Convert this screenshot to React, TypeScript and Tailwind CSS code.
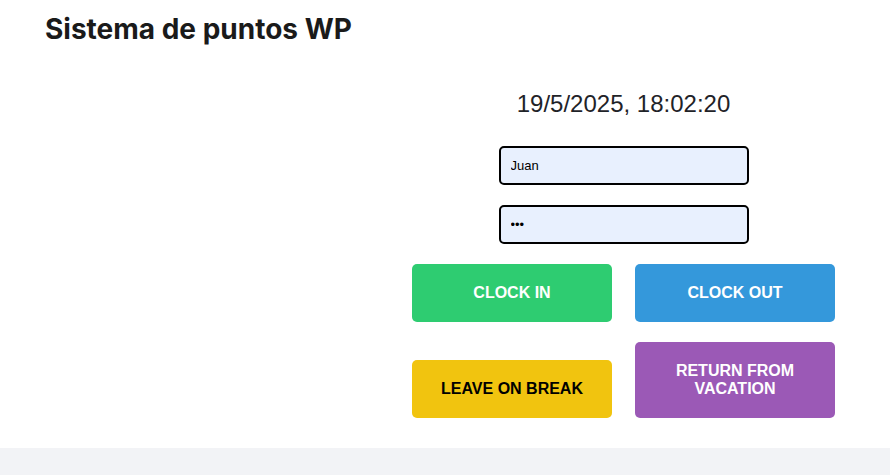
import React from "react";

function Btn({ className, children }: { className: string; children: React.ReactNode }) {
  return (
    <button
      className={
        "rounded-[5px] font-bold text-[16px] leading-[18px] font-['Liberation_Sans',Arial,sans-serif] " + className
      }
    >
      {children}
    </button>
  );
}

export default function App() {
  return (
    <div className="min-h-screen bg-[#f2f3f6]">
      <div className="h-[448px] bg-white">
        <h1 className="pl-[45px] pt-[13px] text-[28px] leading-[32px] font-bold text-[#1a1a1a] font-['Inter','Noto_Sans',sans-serif]">
          Sistema de puntos WP
        </h1>
        <div className="ml-[412px] w-[423px] flex flex-col items-center pt-[45px] font-['Liberation_Sans',Arial,sans-serif]">
          <div className="text-[24px] leading-[28px] text-[#1f2328]">19/5/2025, 18:02:20</div>
          <input
            className="mt-[28px] w-[250px] h-[39px] rounded-[5px] border-2 border-black bg-[#e8f0fe] px-[10px] text-[13px] text-black outline-none font-['Liberation_Sans',Arial,sans-serif]"
            defaultValue="Juan"
          />
          <input
            type="password"
            className="mt-[20px] w-[250px] h-[39px] rounded-[5px] border-2 border-black bg-[#e8f0fe] px-[10px] text-[13px] text-black outline-none font-['Liberation_Sans',Arial,sans-serif]"
            defaultValue="123"
          />
          <div className="mt-[20px] w-full grid grid-cols-[200px_200px] justify-between gap-y-[20px] items-end">
            <Btn className="h-[58px] bg-[#2ecc71] text-white">CLOCK IN</Btn>
            <Btn className="h-[58px] bg-[#3498db] text-white">CLOCK OUT</Btn>
            <Btn className="h-[58px] bg-[#f1c40f] text-black">LEAVE ON BREAK</Btn>
            <Btn className="h-[76px] bg-[#9b59b6] text-white px-[20px]">RETURN FROM VACATION</Btn>
          </div>
        </div>
      </div>
    </div>
  );
}
